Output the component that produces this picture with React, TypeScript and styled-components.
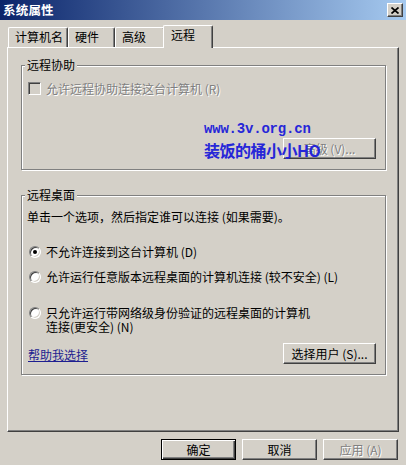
import React from "react";
import styled, { createGlobalStyle, css } from "styled-components";

const FONT = `"Noto Sans CJK SC", "Liberation Sans", sans-serif`;
const FACE = "#d4d0c8";

const Global = createGlobalStyle`
  html, body { margin: 0; padding: 0; background: ${FACE}; }
  body { font-family: ${FONT}; font-size: 12px; color: #000; }
  * { box-sizing: border-box; }
`;

const Window = styled.div`
  position: relative;
  width: 406px;
  height: 465px;
  display: flex;
  flex-direction: column;
  background: ${FACE};
  overflow: hidden;
`;

const TitleBar = styled.div`
  height: 20px;
  flex: none;
  display: flex;
  align-items: center;
  justify-content: space-between;
  padding: 0 3px 0 3px;
  background: linear-gradient(to right, #0a246a 0%, #a6caf0 100%);
`;

const TitleText = styled.span`
  color: #fff;
  font-weight: bold;
  font-size: 12.5px;
  line-height: 14px;
  letter-spacing: 0.2px;
`;

const CloseButton = styled.div`
  width: 16px;
  height: 14px;
  background: ${FACE};
  border: 1px solid;
  border-color: #fff #404040 #404040 #fff;
  box-shadow: inset -1px -1px 0 #808080;
  display: flex;
  align-items: center;
  justify-content: center;
`;

const Body = styled.div`
  flex: 1;
  display: flex;
  flex-direction: column;
  padding: 5px 7px 0 7px;
`;

const TabRow = styled.div`
  height: 22px;
  display: flex;
  align-items: flex-end;
  padding-left: 1px;
`;

const Tab = styled.div<{ $w: number; $active?: boolean }>`
  width: ${(p) => p.$w}px;
  height: 20px;
  padding: 2px 0 0 6px;
  line-height: 14px;
  white-space: nowrap;
  background: ${FACE};
  border-top: 1px solid #fff;
  border-left: 1px solid #fff;
  border-right: 1px solid #404040;
  border-top-left-radius: 2px;
  border-top-right-radius: 2px;
  box-shadow: inset -1px 0 0 #808080;
  ${(p) =>
    p.$active &&
    css`
      width: ${p.$w + 4}px;
      height: 23px;
      margin: 0 -2px -1px -2px;
      padding: 2px 0 0 7px;
      position: relative;
      z-index: 2;
    `}
`;

const Panel = styled.div`
  height: 385px;
  flex: none;
  border-top: 1px solid #fff;
  border-left: 1px solid #fff;
  border-right: 1px solid #404040;
  border-bottom: 1px solid #404040;
  box-shadow: inset -1px -1px 0 #808080;
  padding: 0 12px 0 13px;
  display: flex;
  flex-direction: column;
`;

const Group = styled.fieldset<{ $h: number; $top: number }>`
  margin: ${(p) => p.$top}px 0 0 0;
  height: ${(p) => p.$h}px;
  min-width: 0;
  border: 1px solid #808080;
  box-shadow: 1px 1px 0 #fff, inset 1px 1px 0 #fff;
  padding: 0 9px 0 5px;
  display: flex;
  flex-direction: column;
`;

const Legend = styled.legend`
  margin-left: -2px;
  padding: 0 2px;
  line-height: 14px;
  background: ${FACE};
`;

const Row = styled.div<{ $top: number }>`
  display: flex;
  align-items: flex-start;
  margin-top: ${(p) => p.$top}px;
  line-height: 14px;
`;

const Text = styled.span<{ $disabled?: boolean }>`
  line-height: 14px;
  white-space: nowrap;
  ${(p) =>
    p.$disabled &&
    css`
      color: #808080;
      text-shadow: 1px 1px 0 #fff;
    `}
`;

const TextLines = styled.span`
  display: flex;
  flex-direction: column;
  gap: 0;
`;

const CheckBox = styled.span`
  width: 13px;
  height: 13px;
  flex: none;
  margin: 0 5px 0 1px;
  background: ${FACE};
  border: 1px solid;
  border-color: #808080 #fff #fff #808080;
  box-shadow: inset 1px 1px 0 #404040, inset -1px -1px 0 ${FACE};
`;

const Radio = styled.span<{ $checked?: boolean }>`
  width: 12px;
  height: 12px;
  flex: none;
  margin: 1px 5px 0 2px;
  border-radius: 50%;
  background: #fff;
  border: 1px solid;
  border-color: #808080 #fff #fff #808080;
  box-shadow: inset 1px 1px 0 #404040, inset -1px -1px 0 ${FACE};
  display: flex;
  align-items: center;
  justify-content: center;
  &::after {
    content: "";
    width: 4px;
    height: 4px;
    border-radius: 50%;
    background: ${(p) => (p.$checked ? "#000" : "transparent")};
  }
`;

const Btn = styled.button<{ $w: number; $default?: boolean }>`
  width: ${(p) => p.$w}px;
  height: 21px;
  flex: none;
  padding: 0;
  font-family: ${FONT};
  font-size: 12px;
  line-height: 14px;
  color: #000;
  background: ${FACE};
  border: 1px solid;
  border-color: #fff #404040 #404040 #fff;
  box-shadow: inset -1px -1px 0 #808080;
  ${(p) =>
    p.$default &&
    css`
      border: 1px solid #000;
      box-shadow: inset 1px 1px 0 #fff, inset -1px -1px 0 #404040, inset -2px -2px 0 #808080;
    `}
  &:disabled {
    color: #808080;
    text-shadow: 1px 1px 0 #fff;
  }
`;

const ButtonRow = styled.div<{ $top: number }>`
  display: flex;
  justify-content: flex-end;
  margin-top: ${(p) => p.$top}px;
`;

const LinkRow = styled.div`
  display: flex;
  justify-content: space-between;
  align-items: flex-start;
  margin-top: 9px;
`;

const HelpLink = styled.a`
  margin: 5px 0 0 1px;
  line-height: 14px;
  color: #1e1e90;
  text-decoration: underline;
`;

const Footer = styled.div`
  display: flex;
  justify-content: flex-end;
  gap: 6px;
  margin-top: 7px;
  padding-right: 1px;
`;

const Watermark = styled.div`
  position: absolute;
  left: 204px;
  top: 121px;
  color: #2626d8;
  font-weight: bold;
  pointer-events: none;
`;

const WmLine1 = styled.div`
  font-family: "Liberation Mono", monospace;
  font-size: 14px;
  line-height: 16px;
  letter-spacing: -0.2px;
`;

const WmLine2 = styled.div`
  font-family: "Noto Sans CJK SC", sans-serif;
  font-size: 16px;
  line-height: 22px;
  margin-top: 2px;
  letter-spacing: -0.5px;
`;

export default function App() {
  return (
    <>
      <Global />
      <Window>
        <TitleBar>
          <TitleText>系统属性</TitleText>
          <CloseButton>
            <svg width="8" height="7" viewBox="0 0 8 7">
              <path d="M0.5 0.5 L7.5 6.5 M7.5 0.5 L0.5 6.5" stroke="#000" strokeWidth="1.7" />
            </svg>
          </CloseButton>
        </TitleBar>
        <Body>
          <TabRow>
            <Tab $w={60}>计算机名</Tab>
            <Tab $w={47}>硬件</Tab>
            <Tab $w={50}>高级</Tab>
            <Tab $w={46} $active>
              远程
            </Tab>
          </TabRow>
          <Panel>
            <Group $top={10} $h={112}>
              <Legend>远程协助</Legend>
              <Row $top={10}>
                <CheckBox />
                <Text $disabled>允许远程协助连接这台计算机 (R)</Text>
              </Row>
              <ButtonRow $top={42}>
                <Btn $w={93} disabled>
                  高级 (V)...
                </Btn>
              </ButtonRow>
            </Group>
            <Group $top={18} $h={187}>
              <Legend>远程桌面</Legend>
              <Row $top={8}>
                <Text>单击一个选项，然后指定谁可以连接 (如果需要)。</Text>
              </Row>
              <Row $top={21}>
                <Radio $checked />
                <Text>不允许连接到这台计算机 (D)</Text>
              </Row>
              <Row $top={11}>
                <Radio />
                <Text>允许运行任意版本远程桌面的计算机连接 (较不安全) (L)</Text>
              </Row>
              <Row $top={22}>
                <Radio />
                <TextLines>
                  <Text>只允许运行带网络级身份验证的远程桌面的计算机</Text>
                  <Text>连接(更安全) (N)</Text>
                </TextLines>
              </Row>
              <LinkRow>
                <HelpLink href="#">帮助我选择</HelpLink>
                <Btn $w={93}>选择用户 (S)...</Btn>
              </LinkRow>
            </Group>
          </Panel>
          <Footer>
            <Btn $w={75} $default>
              确定
            </Btn>
            <Btn $w={75}>取消</Btn>
            <Btn $w={75} disabled>
              应用 (A)
            </Btn>
          </Footer>
        </Body>
        <Watermark>
          <WmLine1>www.3v.org.cn</WmLine1>
          <WmLine2>装饭的桶小小HO</WmLine2>
        </Watermark>
      </Window>
    </>
  );
}
